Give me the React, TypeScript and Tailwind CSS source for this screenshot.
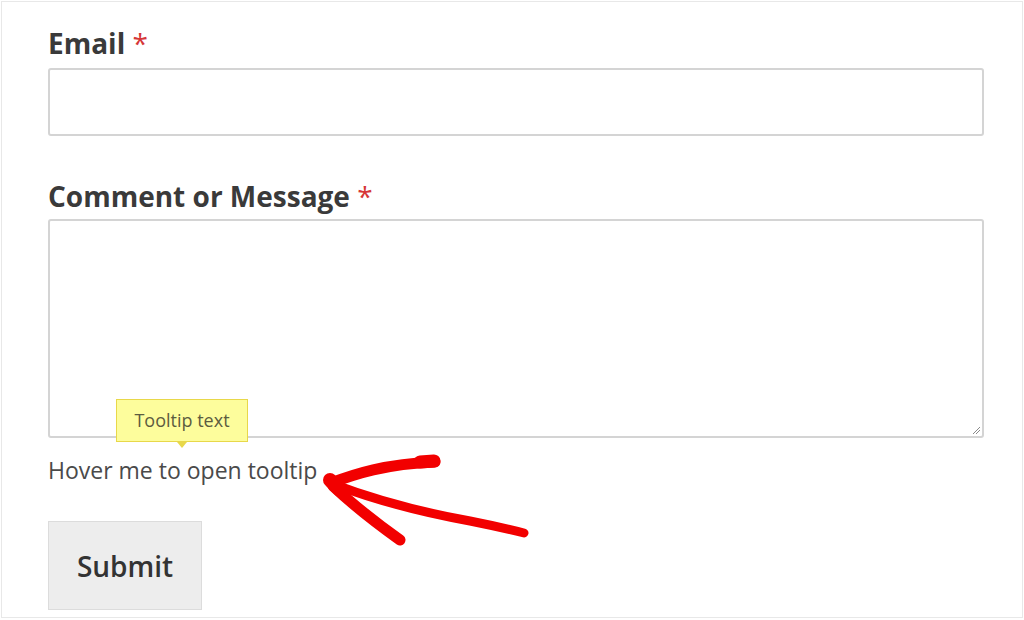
import React from "react";

export default function App() {
  return (
    <div className="relative w-[1024px] h-[620px] bg-white p-px" style={{ fontFamily: '"Open Sans", "Noto Sans", sans-serif' }}>
      <div className="w-full h-[617px] border border-[#e8e8e8] px-[46px] pt-[23px]">
        <label className="block text-[28px] leading-[36px] font-bold text-[#3a3a3a]">
          Email <span className="text-[#d63637] font-normal">*</span>
        </label>
        <div className="mt-[7px] h-[68px] w-[936px] rounded-[3px] border-2 border-[#d4d4d4] bg-white" />
        <label className="mt-[42px] block text-[28px] leading-[36px] font-bold text-[#3a3a3a]">
          Comment or Message <span className="text-[#d63637] font-normal">*</span>
        </label>
        <div className="relative mt-[5px] h-[219px] w-[936px] rounded-[3px] border-2 border-[#d4d4d4] bg-white">
          <svg className="absolute right-[1px] bottom-[1px]" width="10" height="10" viewBox="0 0 10 10">
            <line x1="2" y1="9" x2="9" y2="2" stroke="#8a8a8a" strokeWidth="1" />
            <line x1="5" y1="9" x2="9" y2="5" stroke="#8a8a8a" strokeWidth="1" />
          </svg>
        </div>
        <div className="relative mt-[17px] flex items-center">
          <span className="text-[23px] leading-[30px] text-[#4a4a4a]">Hover me to open tooltip</span>
          <div className="absolute left-[68px] top-[-56px] flex h-[43px] w-[132px] items-center justify-center border border-[#e8d84a] bg-[#fdfd9c] text-[18px] text-[#5c5c40]">
            Tooltip text
            <div className="absolute bottom-[-7px] left-[60px] h-0 w-0 border-x-[5px] border-t-[6px] border-x-transparent border-t-[#e8d84a]" />
          </div>
        </div>
        <button className="mt-[36px] flex h-[89px] w-[154px] items-center justify-center border border-[#dcdcdc] bg-[#ededed] text-[28px] font-semibold text-[#333]">
          Submit
        </button>
      </div>
      <svg className="absolute left-0 top-0 pointer-events-none" width="1024" height="620" viewBox="0 0 1024 620">
        <g fill="none" stroke="#f20000" strokeLinecap="round" strokeLinejoin="round">
          <path d="M331 483 C 355 474, 385 464, 435 462" strokeWidth="11" />
          <path d="M420 462 L 434 461" strokeWidth="13" />
          <path d="M333 484 C 370 498, 420 512, 470 521 C 495 526, 512 530, 524 533" strokeWidth="9" />
          <path d="M333 486 C 350 502, 372 520, 400 540" strokeWidth="11" />
          <path d="M330 480 L 340 490" strokeWidth="14" />
        </g>
      </svg>
    </div>
  );
}
